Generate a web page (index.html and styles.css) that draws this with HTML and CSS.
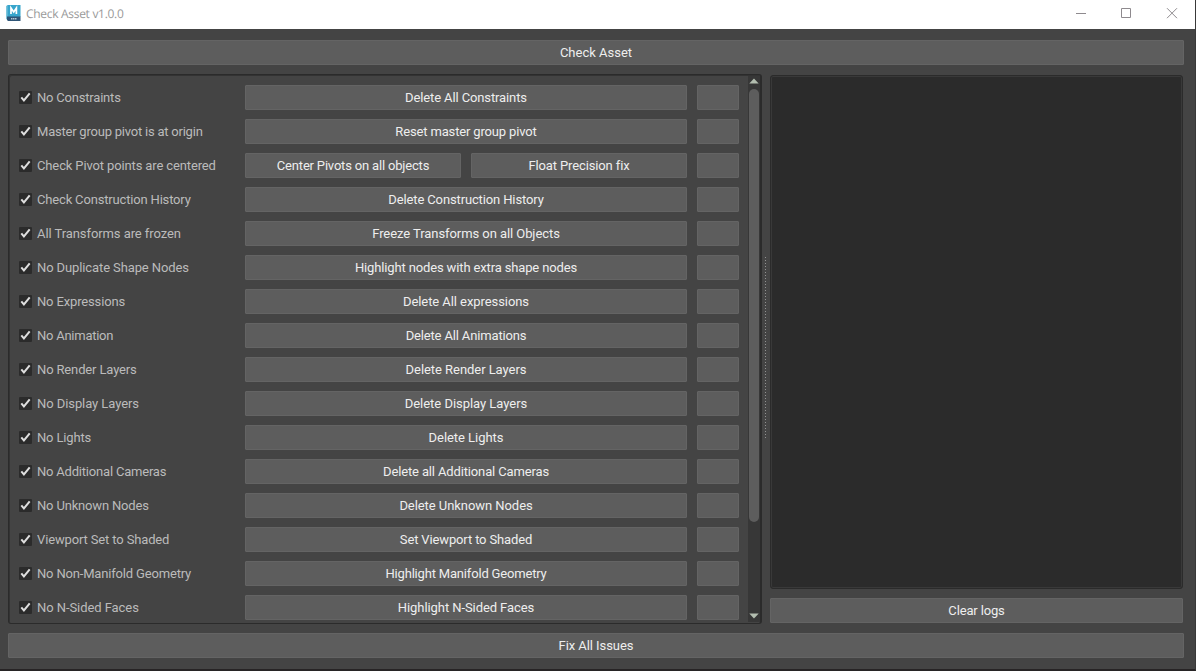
FILE: index.html
```
<!DOCTYPE html>
<html lang="en">
<head>
<meta charset="utf-8">
<title>Check Asset v1.0.0</title>
<link rel="stylesheet" href="styles.css">
</head>
<body>
<svg class="defs" width="0" height="0"><defs>
<symbol id="tick" viewBox="0 0 13 13"><path d="M2.300 6.400 4.900 9.400 10.700 2.300" fill="none" stroke="#dedede" stroke-width="2"/></symbol>
</defs></svg>
<div class="window">
  <header class="titlebar">
    <svg class="logo" width="16" height="16" viewBox="0 0 16 16"><path d="M0 1 2 0V15L0 14Z" fill="#7cc4dc"/><rect x="1.500" width="13" height="12" fill="#37a5cc"/><path d="M1 11.500H14.500V16H2L1 15Z" fill="#2f5577"/><path d="M5 9V3L7.700 7 10.400 3V9" fill="none" stroke="#fff" stroke-width="1.700"/><path d="M5 13.800H11" stroke="#b4c5d2" stroke-width="1.400" stroke-dasharray="1.500 .5"/></svg>
    <span class="title">Check Asset v1.0.0</span>
    <svg class="controls" width="104" height="12" viewBox="0 0 104 12" fill="none" stroke="#8e8a8e"><path d="M0 6.500H10M45.500 1.500H54.500V10.500H45.500ZM91 1.200 101 11.200M101 1.200 91 11.200"/></svg>
  </header>
  <main class="content">
    <button class="btn">Check Asset</button>
    <div class="split">
      <section class="checks">
        <div class="rows" id="rows"></div>
        <div class="scrollbar">
          <svg width="10" height="6" viewBox="0 0 10 6"><path d="M.3 5.500 5 .5 9.700 5.500Z" fill="#b3beb0"/></svg>
          <div class="handle"></div>
          <svg class="down" width="10" height="6" viewBox="0 0 10 6"><path d="M.3 .5 5 5.500 9.700 .5Z" fill="#b3beb0"/></svg>
        </div>
      </section>
      <div class="splitter"><div class="grip"></div></div>
      <section class="logs">
        <div class="log"></div>
        <button class="btn clear">Clear logs</button>
      </section>
    </div>
    <button class="btn fix">Fix All Issues</button>
  </main>
</div>
<script src="rows.js"></script>
</body>
</html>
```
FILE: styles.css
```
* { box-sizing: border-box; }
body { margin: 0; background: #444; font: 13px/15px Roboto, sans-serif; color: #bbb; overflow: hidden; }
.defs { position: absolute; }
.window { width: 1196px; height: 671px; display: flex; flex-direction: column; border-right: 1px solid #393939; border-bottom: 2px solid #272425; }
.titlebar { height: 29px; flex: none; display: flex; align-items: center; background: #fff; padding: 0 13px 3px 6px; }
.logo { margin-right: 4px; }
.title { font: 12px/16px "Open Sans", sans-serif; color: #999; flex: 1; letter-spacing: -0.3px; padding-top: 1px; text-rendering: geometricPrecision; }
.controls { margin-right: 2px; }
.content { flex: 1; padding: 11px 11px 11px 8px; display: flex; flex-direction: column; }
.btn { height: 25px; flex: 1; padding: 0; border: 1px solid #646464; border-radius: 1px; background: #5d5d5d; color: #eee; font: inherit; }
.content > .btn, .logs > .btn { flex: none; }
.clear { letter-spacing: -0.15px; }
.fix { letter-spacing: -0.07px; }
.split { display: flex; height: 550px; margin: 9px 1px 9px 0; }
.checks { width: 754px; display: flex; justify-content: space-between; border: 2px solid #2b2b2b; border-width: 1px 2px 1px 1px; border-radius: 3px; box-shadow: inset 1px 1px #333; }
.rows { display: flex; flex-direction: column; gap: 9px; padding: 10px 0 0 10px; }
.row { display: grid; grid-template-columns: 216px 442px 42px; column-gap: 10px; height: 25px; align-items: center; }
.check { display: flex; align-items: center; gap: 5px; white-space: nowrap; }
.box { width: 13px; height: 13px; background: #2b2b2b; border-radius: 1px; }
.actions { display: flex; gap: 10px; }
.scrollbar { width: 12px; background: #373737; display: flex; flex-direction: column; align-items: center; margin: 1px 0; padding: 2px 0 3px; }
.handle { width: 10px; height: 433px; margin-top: 5px; background: #5d5d5d; border-radius: 5px; }
.down { margin-top: auto; }
.splitter { width: 8px; display: flex; align-items: center; padding-left: 3px; }
.grip { width: 1px; height: 182px; margin-top: -2px; background: repeating-linear-gradient(#929292 0 1px, transparent 1px 3px); }
.logs { width: 413px; display: flex; flex-direction: column; padding: 1px 0; gap: 9px; }
.log { flex: 1; background: #2b2b2b; border: 1px solid #2b2b2b; border-radius: 3px; box-shadow: inset 0 0 0 1px #393939; }
```
FILE: rows.js
```
// Each text is paired with its letter spacing in hundredths of a pixel.
const rows = [
  [["No Constraints", -20], ["Delete All Constraints", -12]],
  [["Master group pivot is at origin", -22], ["Reset master group pivot", -15]],
  [["Check Pivot points are centered", -13], ["Center Pivots on all objects", -18], ["Float Precision fix", -13]],
  [["Check Construction History", -17], ["Delete Construction History", -13]],
  [["All Transforms are frozen", -8], ["Freeze Transforms on all Objects", -7]],
  [["No Duplicate Shape Nodes", -11], ["Highlight nodes with extra shape nodes", -14]],
  [["No Expressions", -15], ["Delete All expressions", -7]],
  [["No Animation", -25], ["Delete All Animations", -15]],
  [["No Render Layers", -14], ["Delete Render Layers", -5]],
  [["No Display Layers", -7], ["Delete Display Layers", -3]],
  [["No Lights", -15], ["Delete Lights", -5]],
  [["No Additional Cameras", -20], ["Delete all Additional Cameras", -14]],
  [["No Unknown Nodes", -17], ["Delete Unknown Nodes", -6]],
  [["Viewport Set to Shaded", -14], ["Set Viewport to Shaded", -14]],
  [["No Non-Manifold Geometry", -17], ["Highlight Manifold Geometry", -18]],
  [["No N-Sided Faces", -7], ["Highlight N-Sided Faces", -8]]
];
const spacing = n => `style="letter-spacing:${n / 100}px"`;
document.getElementById("rows").innerHTML = rows.map(([[label, s], ...actions]) => `
  <div class="row">
    <div class="check"><svg class="box"><use href="#tick"/></svg><span ${spacing(s)}>${label}</span></div>
    <div class="actions">${actions.map(([text, n]) => `<button class="btn" ${spacing(n)}>${text}</button>`).join("")}</div>
    <button class="btn"></button>
  </div>`).join("");
```
